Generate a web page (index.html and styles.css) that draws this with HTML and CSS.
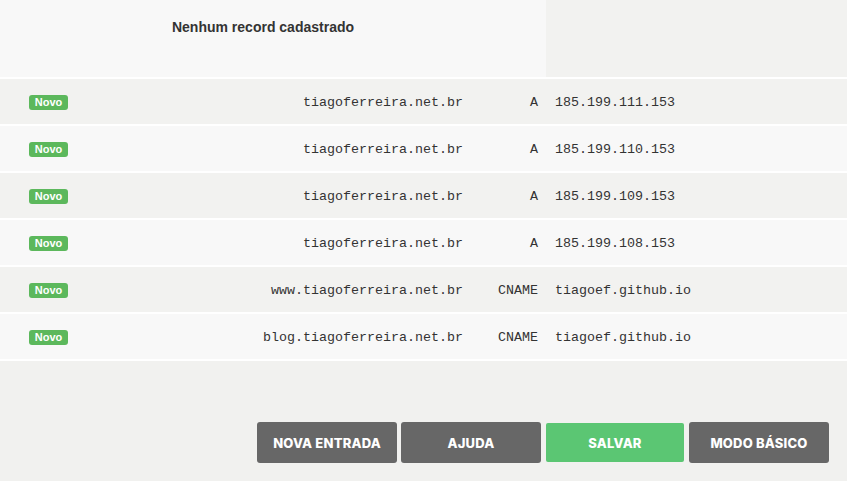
FILE: index.html
```html
<!DOCTYPE html>
<html lang="pt-BR">
<head>
<meta charset="utf-8">
<title>DNS records</title>
<link rel="stylesheet" href="styles.css">
</head>
<body>
<div class="page">
  <div class="top">
    <div class="empty">Nenhum record cadastrado</div>
    <div class="side"></div>
  </div>
  <div class="records">
    <div class="row odd"><div class="c-badge"><span class="badge">Novo</span></div><div class="c-name">tiagoferreira.net.br</div><div class="c-type">A</div><div class="c-val">185.199.111.153</div></div>
    <div class="row even"><div class="c-badge"><span class="badge">Novo</span></div><div class="c-name">tiagoferreira.net.br</div><div class="c-type">A</div><div class="c-val">185.199.110.153</div></div>
    <div class="row odd"><div class="c-badge"><span class="badge">Novo</span></div><div class="c-name">tiagoferreira.net.br</div><div class="c-type">A</div><div class="c-val">185.199.109.153</div></div>
    <div class="row even"><div class="c-badge"><span class="badge">Novo</span></div><div class="c-name">tiagoferreira.net.br</div><div class="c-type">A</div><div class="c-val">185.199.108.153</div></div>
    <div class="row odd"><div class="c-badge"><span class="badge">Novo</span></div><div class="c-name">www.tiagoferreira.net.br</div><div class="c-type">CNAME</div><div class="c-val">tiagoef.github.io</div></div>
    <div class="row even"><div class="c-badge"><span class="badge">Novo</span></div><div class="c-name">blog.tiagoferreira.net.br</div><div class="c-type">CNAME</div><div class="c-val">tiagoef.github.io</div></div>
  </div>
  <div class="actions">
    <button class="btn">NOVA ENTRADA</button>
    <button class="btn">AJUDA</button>
    <button class="btn btn-green">SALVAR</button>
    <button class="btn">MODO BÁSICO</button>
  </div>
</div>
</body>
</html>
```

FILE: styles.css
```css
html, body {
  margin: 0;
  padding: 0;
  background: #f1f1ef;
}
.page {
  width: 847px;
  height: 481px;
  display: flex;
  flex-direction: column;
  font-family: "Liberation Sans", Arial, sans-serif;
  color: #333;
}
.top {
  display: flex;
  height: 77px;
}
.empty {
  width: 526px;
  padding-right: 20px;
  background: #f8f8f8;
  text-align: center;
  font-weight: bold;
  font-size: 14px;
  padding-top: 19px;
  box-sizing: content-box;
}
.side {
  flex: 1;
  background: #f2f2f0;
}
.records {
  background: #fff;
  padding-top: 2px;
  padding-bottom: 2px;
  display: flex;
  flex-direction: column;
  gap: 2px;
}
.row {
  height: 45px;
  padding-top: 1px;
  box-sizing: border-box;
  display: grid;
  grid-template-columns: 100px 363px 75px 1fr;
  align-items: center;
  font-family: "Liberation Mono", "Courier New", monospace;
  font-size: 13.33px;
  color: #333;
}
.row.odd { background: #f2f2f0; }
.row.even { background: #f8f8f8; }
.c-badge {
  padding-left: 29px;
  display: flex;
}
.badge {
  display: inline-block;
  background: #5cb85c;
  color: #fff;
  font-family: "Liberation Sans", Arial, sans-serif;
  font-weight: bold;
  font-size: 11px;
  line-height: 15px;
  padding: 0 5px;
  border-radius: 3px;
  width: 29px;
  text-align: center;
}
.c-name, .c-type {
  text-align: right;
  white-space: nowrap;
}
.c-val {
  padding-left: 17px;
  white-space: nowrap;
}
.actions {
  flex: 1;
  display: flex;
  justify-content: flex-end;
  align-items: flex-end;
  gap: 4px;
  padding: 0 18px 18px 0;
}
.btn {
  width: 140px;
  height: 41px;
  border: 0;
  border-radius: 3px;
  background: #676767;
  color: #fff;
  font-family: Inter, "Open Sans", sans-serif;
  font-weight: 800;
  font-size: 13px;
  letter-spacing: 0.2px;
  padding: 0;
  cursor: pointer;
}
.btn-green {
  background: #5bc673;
  background-clip: padding-box;
  border: 1px solid transparent;
}
```
